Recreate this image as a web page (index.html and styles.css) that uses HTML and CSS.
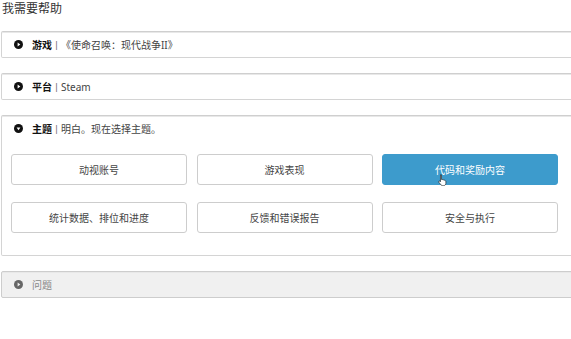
FILE: index.html
```html
<!DOCTYPE html>
<html lang="zh-CN">
<head>
    <meta charset="UTF-8">
    <meta name="viewport" content="width=device-width, initial-scale=1.0">
    <title>我需要帮助</title>
    <link rel="stylesheet" href="styles.css">
</head>
<body>
    <div class="page">
        <h1 class="title">我需要帮助</h1>

        <div class="panel">
            <div class="panel-head">
                <svg class="toggle" viewBox="0 0 10 10"><circle cx="5" cy="5" r="5" fill="#111"/><path d="M4 2.9 L7 5 L4 7.1 Z" fill="#fff"/></svg>
                <span class="label">游戏</span><span class="sep">|</span><span class="value">《使命召唤：现代战争II》</span>
            </div>
        </div>

        <div class="panel">
            <div class="panel-head">
                <svg class="toggle" viewBox="0 0 10 10"><circle cx="5" cy="5" r="5" fill="#111"/><path d="M4 2.9 L7 5 L4 7.1 Z" fill="#fff"/></svg>
                <span class="label">平台</span><span class="sep">|</span><span class="value">Steam</span>
            </div>
        </div>

        <div class="panel open">
            <div class="panel-head">
                <svg class="toggle" viewBox="0 0 10 10"><circle cx="5" cy="5" r="5" fill="#111"/><path d="M2.9 4 L7.1 4 L5 7 Z" fill="#fff"/></svg>
                <span class="label">主题</span><span class="sep">|</span><span class="value">明白。现在选择主题。</span>
            </div>
            <div class="topics">
                <button class="topic">动视账号</button>
                <button class="topic">游戏表现</button>
                <button class="topic active">代码和奖励内容
                    <svg class="cursor" viewBox="0 0 12 16"><path d="M3.5 1.2c.7 0 1.2.5 1.2 1.2v5l.4-.1c.6-.2 1.2.1 1.4.6.5-.3 1.2-.1 1.5.4.5-.2 1.1 0 1.4.5.5 0 1.1.4 1.1 1.1v2.6c0 1.6-1.3 3-3 3H6.2c-.9 0-1.7-.4-2.3-1.1L1.1 11c-.4-.5-.3-1.2.2-1.5.4-.3 1-.2 1.3.1l.7.8V2.4c0-.7.5-1.2 1.2-1.2z" fill="#fff" stroke="#222" stroke-width=".9"/></svg>
                </button>
                <button class="topic">统计数据、排位和进度</button>
                <button class="topic">反馈和错误报告</button>
                <button class="topic">安全与执行</button>
            </div>
        </div>

        <div class="panel disabled">
            <div class="panel-head">
                <svg class="toggle" viewBox="0 0 10 10"><circle cx="5" cy="5" r="5" fill="#666"/><path d="M4 2.9 L7 5 L4 7.1 Z" fill="#f0f0f0"/></svg>
                <span class="value">问题</span>
            </div>
        </div>
    </div>
</body>
</html>
```

FILE: styles.css
```css
html, body { margin: 0; padding: 0; overflow: hidden; background: #fff; }
body { font-family: "Noto Sans", "Noto Sans CJK SC", sans-serif; color: #222; }
.page { width: 600px; padding-left: 1px; }
.title { margin: 0 0 14px 1px; font-size: 12px; font-weight: normal; line-height: 17px; color: #333; }
.panel { border: 1px solid #d4d4d4; border-top-color: #cfcfcf; border-radius: 2px; box-shadow: 0 1px 0 #e8e8e8 inset; background: #fff; margin-bottom: 15px; }
.panel-head { display: flex; align-items: center; height: 25px; padding-left: 12px; font-size: 10px; }
.toggle { width: 9px; height: 9px; margin-right: 9px; flex-shrink: 0; }
.label { font-weight: bold; color: #111; }
.sep { color: #555; margin: 0 2px; font-size: 9px; }
.value { color: #444; }
.open .topics { display: grid; grid-template-columns: repeat(3, 176px); column-gap: 9.5px; row-gap: 17px; padding: 13px 0 22px 9px; }
.topic { position: relative; height: 31px; border: 1px solid #cdcdcd; border-radius: 3px; background: #fff; font-family: inherit; font-size: 10px; color: #444; cursor: pointer; }
.topic.active { background: #3d9bcc; border-color: #3d9bcc; color: #fff; }
.cursor { position: absolute; left: 55px; top: 19px; width: 9px; height: 12px; }
.disabled { background: #f0f0f0; border-color: #cdcdcd; }
.disabled .value { color: #888; }
```
